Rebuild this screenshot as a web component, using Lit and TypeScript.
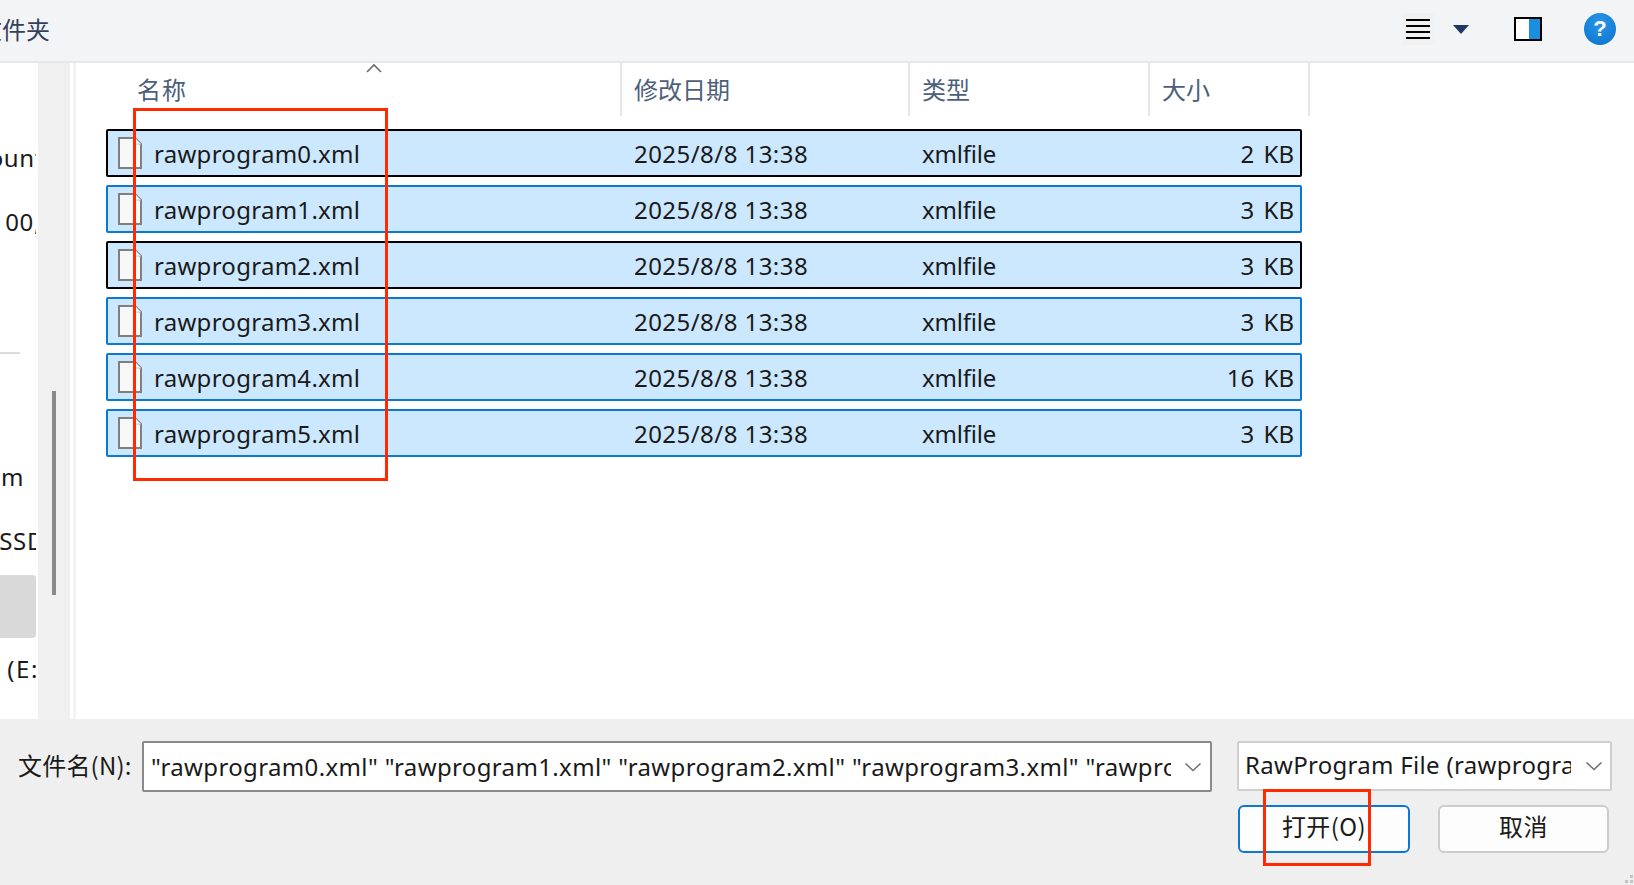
import { LitElement, html, css, svg } from "lit";
import { customElement } from "lit/decorators.js";

const FILES = [
  { name: "rawprogram0.xml", size: "2 KB", focus: true },
  { name: "rawprogram1.xml", size: "3 KB", focus: false },
  { name: "rawprogram2.xml", size: "3 KB", focus: true },
  { name: "rawprogram3.xml", size: "3 KB", focus: false },
  { name: "rawprogram4.xml", size: "16 KB", focus: false },
  { name: "rawprogram5.xml", size: "3 KB", focus: false },
];

const chevron = svg`<svg width="18" height="10" viewBox="0 0 18 10"><path d="M1.5 1.5 L9 8.5 L16.5 1.5" fill="none" stroke="#6f6f6f" stroke-width="1.6"/></svg>`;

@customElement("app-root")
export class AppRoot extends LitElement {
  static styles = css`
    :host {
      display: flex;
      flex-direction: column;
      position: relative;
      width: 1634px;
      height: 885px;
      overflow: hidden;
      background: #fff;
      color: #1a1a1a;
      font-family: "Noto Sans", "Noto Sans CJK SC", sans-serif;
      font-size: 24px;
    }
    .toolbar {
      flex: none;
      box-sizing: border-box;
      height: 63px;
      display: flex;
      align-items: center;
      background: #f3f4f6;
      border-bottom: 2px solid #e6e7ea;
      padding: 0 18px 3px 0;
    }
    .crumb {
      width: 50px;
      display: flex;
      justify-content: flex-end;
      overflow: hidden;
      white-space: nowrap;
      color: #33415c;
      font-family: "Noto Sans CJK SC", sans-serif;
      margin-top: -1px;
    }
    .tools {
      margin-left: auto;
      display: flex;
      align-items: center;
    }
    .hamburger {
      width: 32px;
      height: 32px;
      background: #f1f1f2;
      display: flex;
      flex-direction: column;
      justify-content: center;
      align-items: center;
      gap: 4px;
    }
    .hamburger i {
      display: block;
      width: 24px;
      height: 2px;
      background: #000;
    }
    .caret {
      margin-left: 19px;
      width: 0;
      height: 0;
      border-left: 8px solid transparent;
      border-right: 8px solid transparent;
      border-top: 9px solid #1f3864;
    }
    .pane {
      margin-left: 45px;
      box-sizing: border-box;
      width: 28px;
      height: 24px;
      border: 2px solid #000;
      background: linear-gradient(to right, #fff 0 56%, #1a8fe0 56% 100%);
    }
    .help {
      margin-left: 42px;
      width: 32px;
      height: 32px;
      border-radius: 50%;
      background: radial-gradient(circle at 50% 30%, #2a96e6, #0a72cc);
      color: #fff;
      display: flex;
      align-items: center;
      justify-content: center;
      font-size: 22px;
      font-weight: 700;
      font-family: "Liberation Sans", sans-serif;
    }
    .middle {
      flex: 1;
      min-height: 0;
      display: flex;
    }
    .nav {
      flex: none;
      width: 38px;
      box-sizing: border-box;
      padding-top: 63px;
      display: flex;
      flex-direction: column;
    }
    .nav-item {
      flex: none;
      box-sizing: border-box;
      height: 64px;
      width: 36px;
      padding-bottom: 2px;
      display: flex;
      align-items: center;
      justify-content: flex-end;
      overflow: hidden;
      white-space: nowrap;
      letter-spacing: 0.6px;
    }
    .nav-item.short {
      height: 62px;
    }
    .nav-item.tall {
      height: 67px;
    }
    .account {
      margin-right: -8px;
    }
    .count {
      margin-right: -5px;
    }
    .mem {
      margin-right: 12px;
    }
    .ssd {
      margin-right: -9px;
    }
    .drive {
      margin-right: -3px;
      letter-spacing: 1.6px;
    }
    .nav-rule {
      flex: none;
      height: 2px;
      width: 20px;
      background: #dcdcdc;
      margin: 98px 0 92px;
    }
    .nav-selected {
      flex: none;
      width: 36px;
      height: 63px;
      background: #d9d9d9;
      border-radius: 0 4px 4px 0;
    }
    .track {
      flex: none;
      width: 32px;
      box-sizing: border-box;
      background: #f0f0f0;
      padding: 328px 0 0 14px;
    }
    .thumb {
      width: 4px;
      height: 204px;
      background: #8a8a8a;
    }
    .edge {
      flex: none;
      width: 3px;
      margin-left: 3px;
      background: #f3f3f3;
    }
    .list {
      flex: 1;
      min-width: 0;
      padding-left: 30px;
    }
    .cols {
      display: grid;
      grid-template-columns: 516px 288px 240px 160px;
      width: 1204px;
    }
    .heads {
      position: relative;
      height: 53px;
      color: #4c607a;
      font-family: "Noto Sans CJK SC", sans-serif;
    }
    .head {
      box-sizing: border-box;
      display: flex;
      align-items: center;
      padding: 0 0 3px 12px;
      border-right: 2px solid #e6e6e6;
    }
    .head:first-child {
      padding-left: 31px;
      letter-spacing: 1px;
    }
    .sort {
      position: absolute;
      left: 260px;
      top: 0;
    }
    .rows {
      margin-top: 13px;
      display: flex;
      flex-direction: column;
      gap: 8px;
    }
    .row {
      box-sizing: border-box;
      height: 48px;
      width: 1196px;
      display: grid;
      grid-template-columns: 513px 288px 240px 1fr;
      align-items: center;
      background: #cce8ff;
      border: 2px solid #0a78d4;
      border-radius: 2px;
    }
    .row.focus {
      border-color: #000;
    }
    .cell-name {
      display: flex;
      align-items: center;
      gap: 12px;
      padding-left: 10px;
      letter-spacing: 0.28px;
    }
    .cell-date {
      padding-left: 13px;
      letter-spacing: 0.45px;
    }
    .cell-type {
      padding-left: 13px;
      letter-spacing: -0.2px;
    }
    .cell-size {
      text-align: right;
      padding-right: 6px;
      word-spacing: 3px;
    }
    .footer {
      flex: none;
      height: 166px;
      box-sizing: border-box;
      background: #efefef;
      padding: 22px 22px 0 18px;
      display: flex;
      flex-direction: column;
    }
    .line {
      display: flex;
      align-items: flex-start;
    }
    .label {
      width: 124px;
      height: 46px;
      display: flex;
      align-items: center;
      white-space: nowrap;
      letter-spacing: 0.2px;
      font-family: "Noto Sans CJK SC", sans-serif;
    }
    .field {
      box-sizing: border-box;
      display: flex;
      align-items: center;
      background: #fff;
      border-radius: 2px;
      overflow: hidden;
      white-space: nowrap;
    }
    .field-text {
      flex: 1;
      min-width: 0;
      overflow: hidden;
    }
    .input {
      width: 1070px;
      height: 51px;
      border: 2px solid #8a8a8a;
      padding: 0 8px 0 7px;
      gap: 13px;
      letter-spacing: 0.36px;
    }
    .combo {
      width: 375px;
      height: 50px;
      margin-left: 25px;
      border: 2px solid #cfcfcf;
      padding: 0 7px 0 6px;
      gap: 14px;
      letter-spacing: 0.3px;
    }
    .combo .field-text {
      padding-bottom: 4px;
    }
    .buttons {
      display: flex;
      justify-content: flex-end;
      gap: 28px;
      margin-top: 13px;
      padding-right: 3px;
    }
    .btn {
      box-sizing: border-box;
      width: 171px;
      height: 48px;
      padding-bottom: 8px;
      display: flex;
      align-items: center;
      justify-content: center;
      background: #fdfdfd;
      border: 2px solid #cccccc;
      border-radius: 6px;
      letter-spacing: 0.4px;
      font-family: "Noto Sans CJK SC", sans-serif;
    }
    .btn.primary {
      width: 172px;
      border-color: #0a78d4;
    }
    .mark {
      position: absolute;
      box-sizing: border-box;
      border: 3px solid #ff2a00;
      pointer-events: none;
    }
    .mark-list {
      left: 133px;
      top: 108px;
      width: 255px;
      height: 373px;
    }
    .mark-btn {
      left: 1263px;
      top: 789px;
      width: 108px;
      height: 77px;
    }
    .grip {
      position: absolute;
      right: 0;
      bottom: 0;
    }
  `;

  private fileIcon() {
    return svg`<svg width="24" height="32" viewBox="0 0 24 32"><path d="M1 1 H17 L23 7 V31 H1 Z" fill="#f8f8f8" stroke="#7f7f7f" stroke-width="2"/><path d="M17 1 V7 H23" fill="#fff" stroke="#c4c4c4" stroke-width="1"/></svg>`;
  }

  render() {
    return html`
      <div class="toolbar">
        <div class="crumb"><span>新建文件夹</span></div>
        <div class="tools">
          <div class="hamburger"><i></i><i></i><i></i><i></i></div>
          <div class="caret"></div>
          <div class="pane"></div>
          <div class="help">?</div>
        </div>
      </div>
      <div class="middle">
        <div class="nav">
          <div class="nav-item"><span class="account">Account</span></div>
          <div class="nav-item"><span class="count">100,</span></div>
          <div class="nav-rule"></div>
          <div class="nav-item short"><span class="mem">m</span></div>
          <div class="nav-item tall"><span class="ssd">SSD</span></div>
          <div class="nav-selected"></div>
          <div class="nav-item short"><span class="drive">(E:</span></div>
        </div>
        <div class="track"><div class="thumb"></div></div>
        <div class="edge"></div>
        <div class="list">
          <div class="cols heads">
            <div class="head">名称</div>
            <div class="head">修改日期</div>
            <div class="head">类型</div>
            <div class="head">大小</div>
            <svg class="sort" width="16" height="10" viewBox="0 0 16 10"><path d="M1 9 L8 2 L15 9" fill="none" stroke="#6b6b6b" stroke-width="1.6"/></svg>
          </div>
          <div class="rows">
            ${FILES.map(
              (f) => html`
                <div class="row ${f.focus ? "focus" : ""}">
                  <div class="cell-name">${this.fileIcon()}<span>${f.name}</span></div>
                  <div class="cell-date">2025/8/8 13:38</div>
                  <div class="cell-type">xmlfile</div>
                  <div class="cell-size">${f.size}</div>
                </div>
              `
            )}
          </div>
        </div>
      </div>
      <div class="footer">
        <div class="line">
          <div class="label">文件名(N):</div>
          <div class="field input">
            <div class="field-text">"rawprogram0.xml" "rawprogram1.xml" "rawprogram2.xml" "rawprogram3.xml" "rawprogram4.xml" "rawprogram5.xml"</div>
            ${chevron}
          </div>
          <div class="field combo">
            <div class="field-text">RawProgram File (rawprogram*.xml)</div>
            ${chevron}
          </div>
        </div>
        <div class="buttons">
          <div class="btn primary">打开(O)</div>
          <div class="btn">取消</div>
        </div>
      </div>
      <div class="mark mark-list"></div>
      <div class="mark mark-btn"></div>
      <svg class="grip" width="14" height="10" viewBox="0 0 14 10"><path d="M10 0h3v3h-3zM5 5h3v3H5zM10 5h3v3h-3z" fill="#c4c4c4"/></svg>
    `;
  }
}
